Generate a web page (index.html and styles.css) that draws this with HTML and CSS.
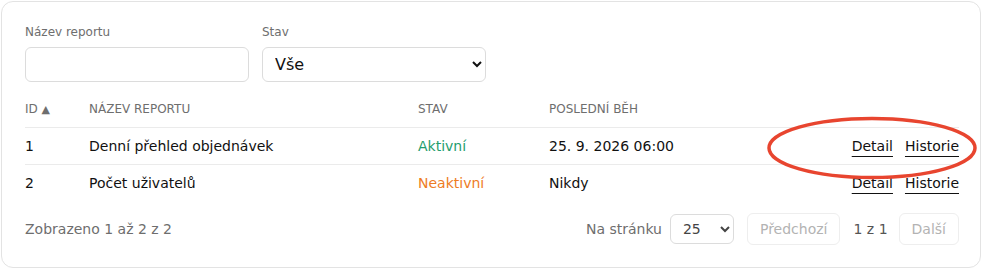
FILE: index.html
```html
<!DOCTYPE html>
<html lang="cs">
<head>
  <meta charset="UTF-8" />
  <meta name="viewport" content="width=device-width, initial-scale=1.0"/>
  <title>Reporty</title>
  <link rel="stylesheet" href="styles.css">
</head>
<body>
  <div class="card">
    <div class="filters">
      <div class="field">
        <label for="name">Název reportu</label>
        <input type="text" id="name" />
      </div>
      <div class="field">
        <label for="state">Stav</label>
        <select id="state">
          <option value="all">Vše</option>
          <option value="active">Aktivní</option>
          <option value="inactive">Neaktivní</option>
        </select>
      </div>
    </div>

    <table class="reports">
      <colgroup>
        <col class="c-id">
        <col class="c-name">
        <col class="c-state">
        <col class="c-run">
        <col>
      </colgroup>
      <thead>
        <tr>
          <th>ID <span class="sort">▲</span></th>
          <th>Název reportu</th>
          <th>Stav</th>
          <th>Poslední běh</th>
          <th></th>
        </tr>
      </thead>
      <tbody>
        <tr>
          <td>1</td>
          <td>Denní přehled objednávek</td>
          <td class="active">Aktivní</td>
          <td>25. 9. 2026 06:00</td>
          <td class="actions"><a href="#">Detail</a><a href="#">Historie</a></td>
        </tr>
        <tr>
          <td>2</td>
          <td>Počet uživatelů</td>
          <td class="inactive">Neaktivní</td>
          <td>Nikdy</td>
          <td class="actions"><a href="#">Detail</a><a href="#">Historie</a></td>
        </tr>
      </tbody>
    </table>

    <div class="footer">
      <span class="count">Zobrazeno 1 až 2 z 2</span>
      <div class="pager">
        <label for="per-page">Na stránku</label>
        <select id="per-page">
          <option>25</option>
          <option>50</option>
          <option>100</option>
        </select>
        <button disabled>Předchozí</button>
        <span class="page">1 z 1</span>
        <button disabled>Další</button>
      </div>
    </div>

    <!-- highlight around the row actions -->
    <svg class="mark" width="212" height="66" viewBox="0 0 212 66">
      <ellipse cx="106" cy="33" rx="103" ry="29.5" fill="none" stroke="#e8452f" stroke-width="3.5"/>
    </svg>
  </div>
</body>
</html>
```

FILE: styles.css
```css
:root {
  --text: #111111;
  --muted: #6e6e6e;
  --border: #e3e3e3;
  --line: #ebebeb;
  --green: #1f9e6e;
  --orange: #ee7c1f;
}

body {
  margin: 0;
  font-family: "DejaVu Sans", Verdana, sans-serif;
  font-size: 14px;
  color: var(--text);
  background: #ffffff;
}

.card {
  position: relative;
  box-sizing: border-box;
  width: 980px;
  margin: 1px;
  padding: 23px 21px 22px 23px;
  border: 1px solid var(--border);
  border-radius: 12px;
}

.filters {
  display: flex;
  gap: 13px;
}

.field {
  display: flex;
  flex-direction: column;
  gap: 7px;
}

.field label {
  font-size: 12px;
  line-height: 15px;
  color: var(--muted);
}

.field input,
.field select {
  box-sizing: border-box;
  width: 224px;
  height: 35px;
  border: 1px solid #dcdcdc;
  border-radius: 6px;
  background: #fff;
  font-family: inherit;
}

.field select {
  padding: 0 6px 0 8px;
  font-size: 16px;
  color: var(--text);
}

.reports {
  width: 100%;
  margin-top: 10px;
  border-collapse: collapse;
  table-layout: fixed;
}

.c-id { width: 64px; }
.c-name { width: 329px; }
.c-state { width: 131px; }
.c-run { width: 210px; }

.reports th {
  padding: 10px 0;
  font-size: 12px;
  line-height: 15px;
  font-weight: normal;
  text-transform: uppercase;
  text-align: left;
  color: var(--muted);
  border-bottom: 1px solid var(--line);
}

.sort {
  font-size: 11px;
}

.reports td {
  padding: 10px 0 9px;
  line-height: 17px;
  white-space: nowrap;
}

.reports tbody tr + tr td {
  border-top: 1px solid var(--line);
}

.active { color: var(--green); }
.inactive { color: var(--orange); }

.actions {
  text-align: right;
}

.actions a {
  margin-left: 12px;
  color: var(--text);
  text-decoration: underline;
  text-underline-offset: 5px;
}

.footer {
  display: flex;
  justify-content: space-between;
  align-items: center;
  margin-top: 12px;
  height: 32px;
}

.count {
  color: var(--muted);
}

.pager {
  display: flex;
  align-items: center;
  gap: 13px;
  color: var(--muted);
}

.pager label {
  margin-right: -5px;
}

.pager select {
  box-sizing: border-box;
  width: 64px;
  height: 30px;
  padding: 0 4px 0 8px;
  border: 1px solid #dcdcdc;
  border-radius: 6px;
  background: #fff;
  font-family: inherit;
  font-size: 14px;
  color: #444;
}

.pager button {
  height: 32px;
  padding: 0 12px;
  border: 1px solid #eeeeee;
  border-radius: 6px;
  background: #fff;
  font-family: inherit;
  font-size: 14px;
  color: #b3b3b3;
}

.page {
  margin-right: -2px;
  color: #555;
}

.mark {
  position: absolute;
  left: 764px;
  top: 113px;
  pointer-events: none;
}
```
